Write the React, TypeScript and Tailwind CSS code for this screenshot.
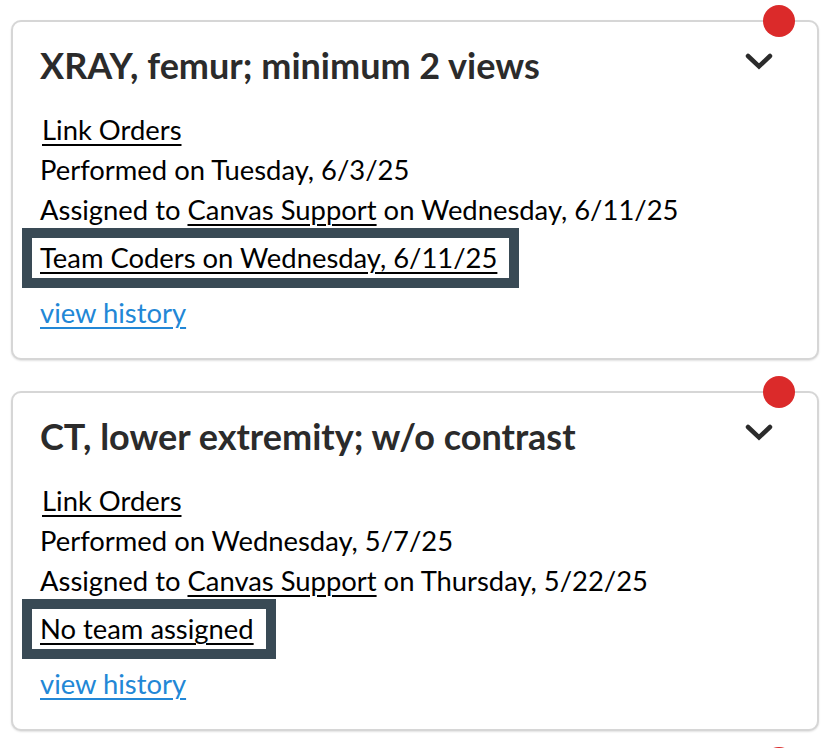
import React from 'react';

interface StudyCardProps {
  title: string;
  performed: string;
  assignedOn: string;
  team: string;
}

const Chevron: React.FC = () => (
  <svg className="mb-[8px] mr-[1px]" width="30" height="20" viewBox="0 0 30 20" fill="none" stroke="#2b2b2b">
    <polyline points="4,5 15,15.5 26,5" strokeWidth={4.5} strokeLinecap="round" strokeLinejoin="miter" />
  </svg>
);

const UnreadDot: React.FC = () => (
  <span className="absolute -top-[17px] right-[22px] w-[32px] h-[32px] rounded-full bg-[#db2a2a]" />
);

const cardClass =
  'relative bg-white border-2 border-[#d6d6d6] rounded-[10px] shadow-[0_1px_2px_rgba(0,0,0,0.12)]';

const StudyCard: React.FC<StudyCardProps> = ({ title, performed, assignedOn, team }) => {
  return (
    <div className={`${cardClass} pl-[27px] pr-[42px] pt-[23px] pb-[25px]`}>
      <UnreadDot />

      {/* Header */}
      <div className="flex items-center justify-between h-[40px]">
        <h2 className="text-[36px] leading-[40px] font-bold text-[#2b2b2b]">{title}</h2>
        <Chevron />
      </div>

      {/* Details */}
      <div className="mt-[25px] text-[27.4px] leading-[40px] text-black">
        <div className="ml-[2px]">
          <span className="underline decoration-[2px] underline-offset-[4px]">Link Orders</span>
        </div>
        <div>{performed}</div>
        <div>
          Assigned to{' '}
          <span className="underline decoration-[2px] underline-offset-[4px]">Canvas Support</span> on {assignedOn}
        </div>
        <div className="-mt-[2px] -ml-[18px] inline-block border-[10px] border-[#394a55] pl-[8px] pr-[12px]">
          <span className="underline decoration-[2px] underline-offset-[4px]">{team}</span>
        </div>
        <div className="mt-[5px] text-[#2287d6]">
          <span className="underline decoration-[2px] underline-offset-[4px]">view history</span>
        </div>
      </div>
    </div>
  );
};

const App: React.FC = () => {
  return (
    <div className="bg-white px-[11px] pt-[20px] flex flex-col gap-[31px] font-['Lato',sans-serif] overflow-hidden h-[748px]">
      <StudyCard
        title="XRAY, femur; minimum 2 views"
        performed="Performed on Tuesday, 6/3/25"
        assignedOn="Wednesday, 6/11/25"
        team="Team Coders on Wednesday, 6/11/25"
      />
      <StudyCard
        title="CT, lower extremity; w/o contrast"
        performed="Performed on Wednesday, 5/7/25"
        assignedOn="Thursday, 5/22/25"
        team="No team assigned"
      />
      {/* Next card, only its top edge is in view */}
      <div className={`${cardClass} shrink-0 h-[340px]`}>
        <UnreadDot />
      </div>
    </div>
  );
};

export default App;
